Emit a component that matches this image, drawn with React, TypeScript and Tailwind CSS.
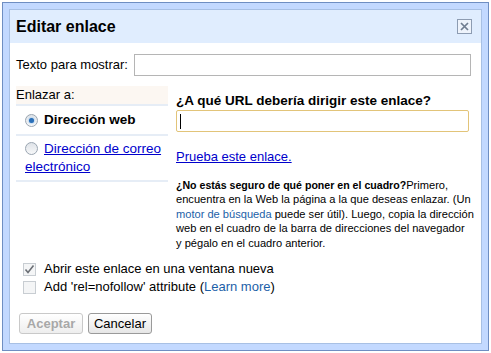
import React from 'react'

const font = { fontFamily: '"Liberation Sans", Arial, sans-serif' }

function Radio({ checked }: { checked?: boolean }) {
    return (
        <span className='inline-block align-[-2px] mr-[6px] w-[13px] h-[13px] rounded-full border border-[#9aa5b1] bg-gradient-to-b from-[#dfe3e8] to-[#f7f8f9] relative'>
            {checked && <span className='absolute left-[3px] top-[3px] w-[5px] h-[5px] rounded-full bg-[#2a6fb8] shadow-[0_0_2px_#5ea4e8]' />}
        </span>
    )
}

function Checkbox({ checked }: { checked?: boolean }) {
    return (
        <span className='inline-flex items-center justify-center w-[13px] h-[13px] border border-[#c8cdd2] bg-[#f4f5f6] mr-[8px] shrink-0'>
            {checked && (
                <svg width='11' height='11' viewBox='0 0 11 11'>
                    <path d='M1.5 5.5 L4 8.5 L9.5 1.5' stroke='#6b6f75' strokeWidth='1.6' fill='none' />
                </svg>
            )}
        </span>
    )
}

export default function App() {
    return (
        <div className='w-[491px] h-[353px] bg-white p-[2px] text-[13px] text-black' style={font}>
            <div className='w-[487px] h-[349px] border border-[#6f8ec2] bg-[#c3d9ff] p-[6px]'>
                <div className='h-full bg-white border border-[#a8c0e4]'>
                    {/* title bar */}
                    <div className='h-[33px] bg-[#e0edfe] flex items-center justify-between pl-[6px] pr-[9px]'>
                        <b className='text-[16px] leading-[20px] mt-[1px]'>Editar enlace</b>
                        <span className='w-[15px] h-[15px] border border-[#8d9cb2] bg-[#eef3fb] flex items-center justify-center'>
                            <svg width='11' height='11' viewBox='0 0 11 11'>
                                <path d='M2 2 L9 9 M9 2 L2 9' stroke='#707d90' strokeWidth='1.7' />
                            </svg>
                        </span>
                    </div>

                    <div className='flex items-center mt-[11px] pl-[6px] pr-[10px]'>
                        <span className='w-[118px]'>Texto para mostrar:</span>
                        <div className='flex-1 h-[22px] border border-[#b5b5b5]' />
                    </div>

                    <div className='flex items-start mt-[10px]'>
                        <div className='w-[152px] ml-[6px] shrink-0'>
                            <div className='bg-[#fcf7f2] h-[18px] leading-[18px]'>Enlazar a:</div>
                            <div className='border-y-2 border-[#e6edf6] bg-white h-[32px] flex items-center pl-[9px] text-[13.5px] font-bold'>
                                <Radio checked />Dirección web
                            </div>
                            <div className='border-b-2 border-[#e6edf6] pl-[9px] pt-[4px] pb-[4px] text-[13.5px] leading-[18px]'>
                                <Radio />
                                <span className='text-[#0000cc] underline'>Dirección de correo electrónico</span>
                            </div>
                        </div>

                        <div className='flex-1 pl-[8px] pt-[6px]'>
                            <b className='text-[13.5px] leading-[18px] block'>¿A qué URL debería dirigir este enlace?</b>
                            <div className='mr-[12px] h-[22px] border border-[#e2c479] rounded-[2px] flex items-center pl-[3px]'>
                                <span className='w-px h-[15px] bg-black' />
                            </div>
                            <div className='mt-[17px] leading-[16px] text-[#0000cc] underline'>Prueba este enlace.</div>
                            <p className='mt-[13px] text-[11.1px] leading-[14.4px]'>
                                <b className='text-[10.6px]'>¿No estás seguro de qué poner en el cuadro?</b>Primero, encuentra en la Web la página a la que deseas enlazar. (Un{' '}
                                <span className='text-[#1c5fa8]'>motor de búsqueda</span> puede ser útil). Luego, copia la dirección web en el cuadro de la barra de direcciones del navegador<br />y pégalo en el cuadro anterior.
                            </p>
                        </div>
                    </div>

                    <div className='mt-[10px] pl-[13px] flex flex-col'>
                        <div className='flex items-center h-[18px]'>
                            <Checkbox checked />Abrir este enlace en una ventana nueva
                        </div>
                        <div className='flex items-center h-[18px]'>
                            <Checkbox />Add 'rel=nofollow' attribute (<span className='text-[#1c5fa8]'>Learn more</span>)
                        </div>
                    </div>

                    <div className='mt-[17px] pl-[9px] flex gap-[5px]'>
                        <button className='h-[21px] w-[64px] border border-[#c9c9c9] rounded-[3px] bg-gradient-to-b from-white to-[#eeeeee] font-bold text-[#a8a8a8]'>Aceptar</button>
                        <button className='h-[21px] w-[64px] border border-[#9a9a9a] rounded-[3px] bg-gradient-to-b from-white to-[#e6e6e6]'>Cancelar</button>
                    </div>
                </div>
            </div>
        </div>
    )
}
